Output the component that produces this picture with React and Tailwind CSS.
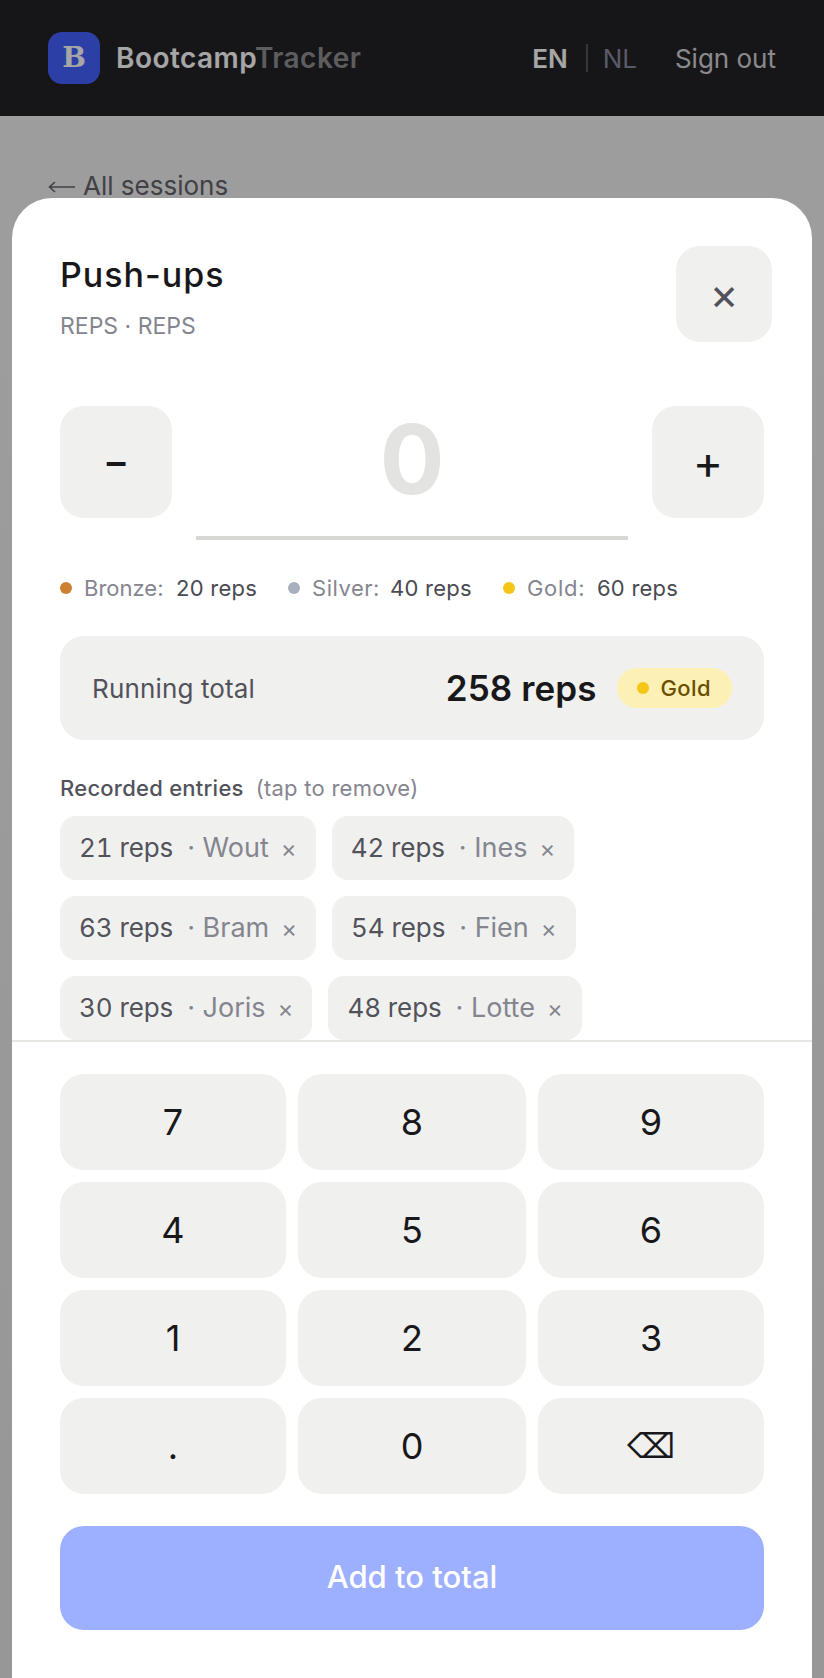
const chips = [
  [["21 reps", "Wout"], ["42 reps", "Ines"]],
  [["63 reps", "Bram"], ["54 reps", "Fien"]],
  [["30 reps", "Joris"], ["48 reps", "Lotte"]],
];
const keys = ["7", "8", "9", "4", "5", "6", "1", "2", "3", ".", "0"];
const legend = [
  ["Bronze:", "20 reps", "bg-[#cd7f32]", "w-[80px]"],
  ["Silver:", "40 reps", "bg-[#a8b0c0]", "w-[66px] tracking-[0.5px]"],
  ["Gold:", "60 reps", "bg-[#f5c518]", "w-[58px] tracking-[0.7px]"],
];

export default function App() {
  return (
    <div className="relative h-[1678px] w-[824px] overflow-hidden bg-linear-to-b from-[#f3f3f3] to-[#e8e8e8] font-['Inter',sans-serif]">
      <header className="flex h-[116px] items-center justify-between bg-[#232326] px-12">
        <div className="flex items-center gap-4">
          <div className="flex h-[52px] w-[52px] items-center justify-center rounded-[14px] bg-[#4361ff] font-['DejaVu_Serif',serif] text-[28px] font-bold text-white">B</div>
          <div className="text-[28px] font-semibold tracking-[0.45px] text-white">
            Bootcamp<span className="text-[#909092]">Tracker</span>
          </div>
        </div>
        <div className="flex items-center text-[26px]">
          <span className="font-semibold text-white">EN</span>
          <span className="mr-[15px] ml-[18px] h-7 w-0.5 bg-[#52525b]"></span>
          <span className="text-[#8a8aa0]">NL</span>
          <span className="ml-[38px] text-[#d4d4d8]">Sign out</span>
        </div>
      </header>
      <div className="flex items-center px-12 pt-[50px] text-[26px] text-[#63636b]">
        <svg className="mt-[3px] mr-2 h-3 w-[27px]" viewBox="0 0 27 12" fill="none" stroke="currentColor" strokeWidth="1.6">
          <path d="M1.5 6H27M7 1L1.5 6L7 11" />
        </svg>
        All sessions
      </div>

      <div className="absolute inset-0 bg-black/35 px-3 pt-[198px]">
        <div className="flex h-full flex-col rounded-t-[40px] bg-white">
          <div className="flex-1 overflow-hidden px-12 pt-12">
            <div className="flex items-start justify-between">
              <div>
                <h1 className="pt-[3px] text-[34px] leading-[52px] font-medium tracking-[1px] text-[#18181b]">Push-ups</h1>
                <p className="mt-[9px] text-[23px] leading-8 text-[#85858f]">REPS · REPS</p>
              </div>
              <button className="-mr-2 flex h-24 w-24 items-center justify-center rounded-3xl bg-[#f0f0ee] text-[44px] text-[#52525b]">×</button>
            </div>

            <div className="mt-16 flex items-start justify-between">
              <button className="flex h-28 w-28 items-center justify-center rounded-3xl bg-[#f0f0ee] pb-[2px] text-[40px] font-medium text-[#18181b]">−</button>
              <div className="flex h-[134px] w-[432px] items-center justify-center border-b-4 border-[#d6d6d2] pb-[24px] text-[96px] font-bold text-[#e3e3e1]">0</div>
              <button className="flex h-28 w-28 items-center justify-center rounded-3xl bg-[#f0f0ee] text-[46px] font-normal text-[#18181b]">+</button>
            </div>

            <div className="mt-[32px] flex h-8 items-center gap-[31px] text-[22px]">
              {legend.map(([a, b, c, w]) => (
                <div key={a} className="flex items-center">
                  <span className={`mr-3 h-3 w-3 rounded-full ${c}`}></span>
                  <span className={`mr-3 text-[#85858f] ${w}`}>{a}</span>
                  <span className="tracking-[0.25px] text-[#4a4a52]">{b}</span>
                </div>
              ))}
            </div>

            <div className="mt-[32px] flex h-[104px] items-center justify-between rounded-3xl bg-[#f0f0ee] px-8">
              <span className="text-[26px] tracking-[0.15px] text-[#52525b]">Running total</span>
              <div className="flex items-center gap-5">
                <span className="text-[35px] font-semibold tracking-[0.1px] text-[#18181b]">258 reps</span>
                <span className="flex h-10 items-center gap-3 rounded-full bg-[#fdf0b4] pr-[21px] pl-5 text-[22px] font-medium tracking-[0.4px] text-[#6b4e00]">
                  <span className="h-3 w-3 rounded-full bg-[#f5c518]"></span>Gold
                </span>
              </div>
            </div>

            <div className="mt-8 flex h-8 items-center gap-3 text-[22px]">
              <span className="font-medium tracking-[0.25px] text-[#52525b]">Recorded entries</span>
              <span className="tracking-[0.25px] text-[#85858f]">(tap to remove)</span>
            </div>

            <div className="mt-3 flex flex-col gap-4">
              {chips.map((row, i) => (
                <div key={i} className="flex gap-4">
                  {row.map(([r, n]) => (
                    <div key={n} className="flex h-16 items-center rounded-2xl bg-[#f0f0ee] px-[19px] pt-px text-[#52525b]">
                      <span>
                        <span className="text-[26px] tracking-[-0.1px] tabular-nums">{r}</span>
                        <span className="ml-[14px] text-[27px] text-[#85858f]">· {n}</span>
                        <span className="ml-3 text-[24px] text-[#85858f]">×</span>
                      </span>
                    </div>
                  ))}
                </div>
              ))}
            </div>
          </div>

          <div className="border-t-2 border-[#e6e6e2] px-12 pt-8 pb-12">
            <div className="grid grid-cols-[226fr_228fr_226fr] gap-3">
              {keys.map((k) => (
                <button key={k} className="flex h-24 items-center justify-center rounded-3xl bg-[#f0f0ee] text-[36px] font-normal text-[#18181b]">{k}</button>
              ))}
              <button className="flex h-24 items-center justify-center rounded-3xl bg-[#f0f0ee] font-['DejaVu_Sans',sans-serif] text-[34px] text-[#18181b]">⌫</button>
            </div>
            <button className="mt-8 flex h-[104px] w-full items-center justify-center rounded-3xl bg-[#9dafff] pb-[2px] text-[31px] font-medium text-white">Add to total</button>
          </div>
        </div>
      </div>
    </div>
  );
}
